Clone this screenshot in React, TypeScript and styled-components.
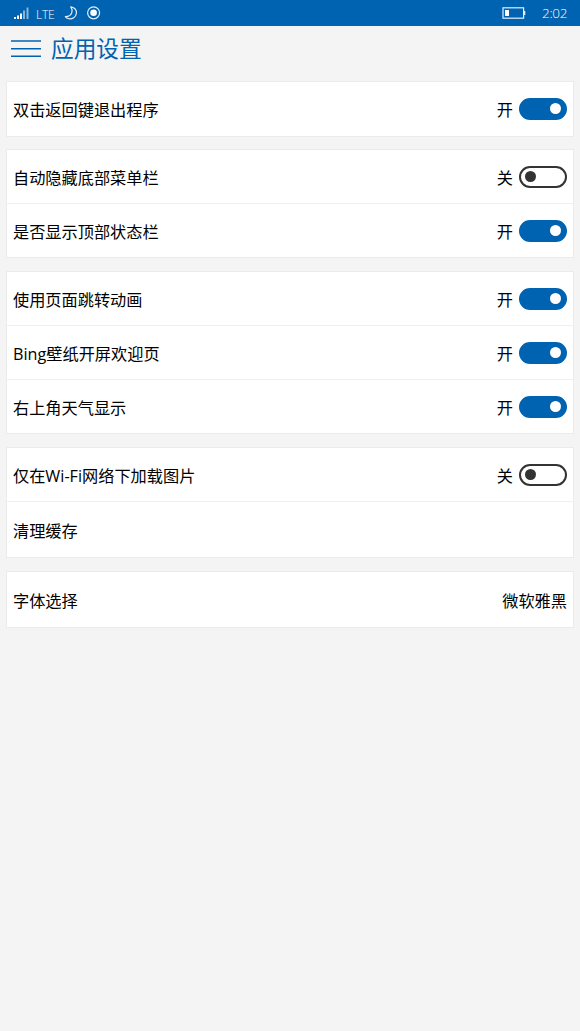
import React from "react";
import styled, { createGlobalStyle } from "styled-components";

const BLUE = "#0063b1";

const GlobalStyle = createGlobalStyle`
  * { box-sizing: border-box; }
  html, body { margin: 0; padding: 0; background: #f4f4f4; }
  body { font-family: "Open Sans", "Noto Sans CJK SC", sans-serif; color: #000; }
`;

const Page = styled.div`
  display: flex;
  flex-direction: column;
  width: 580px;
  height: 1031px;
  overflow: hidden;
  background: #f4f4f4;
`;

const StatusBar = styled.div`
  display: flex;
  justify-content: space-between;
  height: 26px;
  padding: 0 13px 0 13px;
  background: ${BLUE};
  color: #fff;
`;

const StatusGroup = styled.div`
  display: flex;
  align-items: center;
  svg { display: block; }
`;

const Network = styled.span`
  width: 19px;
  margin: 3px 9px 0 6px;
  font: 300 12px/20px "Open Sans", sans-serif;
  letter-spacing: -0.2px;
  white-space: nowrap;
`;

const Clock = styled.span`
  width: 25px;
  margin: 0 0 0 16px;
  font: 300 13.5px/20px "Open Sans", sans-serif;
  letter-spacing: -0.3px;
`;

const Header = styled.header`
  display: flex;
  align-items: center;
  height: 55px;
  padding: 0 0 9px 11px;
  gap: 10px;
  color: ${BLUE};
`;

const MenuButton = styled.button`
  display: flex;
  width: 30px;
  height: 18px;
  padding: 0;
  border: 0;
  background: none;
`;

const Title = styled.h1`
  margin: 0;
  font-size: 22.7px;
  line-height: 32px;
  font-weight: 400;
`;

const Settings = styled.main`
  display: flex;
  flex-direction: column;
  gap: 13px;
  padding: 0 6px;
`;

const Row = styled.div<{ $height: number }>`
  display: flex;
  align-items: center;
  justify-content: space-between;
  height: ${(p) => p.$height}px;
  padding: 0 6px;
  font-size: 16.2px;
  line-height: 24px;
  & + & { border-top: 1px solid #f0f0f0; }
`;

const Card = styled.section`
  display: flex;
  flex-direction: column;
  border: 1px solid #ebebeb;
  background: #fff;

  &:first-child {
    margin-bottom: -1px;
    padding-bottom: 1px;
  }
`;

const Text = styled.span`
  padding-top: 2px;
`;

const Control = styled.div`
  display: flex;
  align-items: center;
  gap: 6px;
`;

const Track = styled.button<{ $on: boolean }>`
  display: flex;
  align-items: center;
  justify-content: ${(p) => (p.$on ? "flex-end" : "flex-start")};
  width: 48px;
  height: 22px;
  padding: 0 4px;
  border: 2px solid ${(p) => (p.$on ? BLUE : "#333")};
  border-radius: 11px;
  background: ${(p) => (p.$on ? BLUE : "#fff")};
`;

const Knob = styled.span<{ $on: boolean }>`
  width: 11px;
  height: 11px;
  border-radius: 50%;
  background: ${(p) => (p.$on ? "#fff" : "#333")};
`;

type Item = { label: string; on?: boolean; value?: string; height: number };

const groups: Item[][] = [
  [{ label: "双击返回键退出程序", on: true, height: 53 }],
  [
    { label: "自动隐藏底部菜单栏", on: false, height: 53 },
    { label: "是否显示顶部状态栏", on: true, height: 54 },
  ],
  [
    { label: "使用页面跳转动画", on: true, height: 53 },
    { label: "Bing壁纸开屏欢迎页", on: true, height: 54 },
    { label: "右上角天气显示", on: true, height: 54 },
  ],
  [
    { label: "仅在Wi-Fi网络下加载图片", on: false, height: 53 },
    { label: "清理缓存", height: 56 },
  ],
  [{ label: "字体选择", value: "微软雅黑", height: 55 }],
];

const SignalIcon = () => (
  <svg width="17" height="14" viewBox="0 0 17 14">
    <path d="M1 11h2v2H1zM4 9.5h2V13H4zM7 7.5h2V13H7z" fill="#fff" />
    <path d="M10 4.5h2V13h-2zM13.5 1.5h2V13h-2z" fill="#86b5dc" />
  </svg>
);

const MenuIcon = () => (
  <svg width="30" height="18" viewBox="0 0 30 18">
    <path d="M0 1h30M0 8.7h30M0 16.3h30" stroke={BLUE} strokeWidth="1.5" />
  </svg>
);

const MoonIcon = () => (
  <svg width="14" height="14" viewBox="0 0 14 14" fill="none" stroke="#e3effa" strokeWidth="1.2" strokeLinejoin="round">
    <path d="M6.8 .8C10.3 1.6 12.8 4 12.4 7.3C12 11.2 8.2 13.3 4.7 12.7C3.2 12.4 2 11.5 1.3 10.6C4.5 10.6 7 9.4 7.8 6.6C8.3 4.7 8 2.6 6.8 .8Z" />
  </svg>
);

const RecordIcon = () => (
  <svg width="14" height="14" viewBox="0 0 14 14">
    <circle cx="6.6" cy="6.8" r="6" fill="none" stroke="#e3effa" strokeWidth="1.2" />
    <circle cx="6.6" cy="6.8" r="3.3" fill="#fff" />
  </svg>
);

const BatteryIcon = () => (
  <svg width="24" height="12" viewBox="0 0 24 12">
    <rect x="1" y=".8" width="20.6" height="10.4" fill="none" stroke="#e3effa" strokeWidth="1.2" />
    <path d="M22 4h1.3v4H22z" fill="#e3effa" />
    <path d="M3 3h4v6H3z" fill="#fff" />
  </svg>
);

const IconGap = styled.span`
  width: 9px;
`;

export default function App() {
  return (
    <Page>
      <GlobalStyle />
      <StatusBar>
        <StatusGroup>
          <SignalIcon />
          <Network>LTE</Network>
          <MoonIcon />
          <IconGap />
          <RecordIcon />
        </StatusGroup>
        <StatusGroup>
          <BatteryIcon />
          <Clock>2:02</Clock>
        </StatusGroup>
      </StatusBar>
      <Header>
        <MenuButton aria-label="菜单">
          <MenuIcon />
        </MenuButton>
        <Title>应用设置</Title>
      </Header>
      <Settings>
        {groups.map((items) => (
          <Card key={items[0].label}>
            {items.map(({ label, on, value, height }) => (
              <Row key={label} $height={height}>
                <Text>{label}</Text>
                {on !== undefined && (
                  <Control>
                    <Text>{on ? "开" : "关"}</Text>
                    <Track $on={on} role="switch" aria-checked={on}>
                      <Knob $on={on} />
                    </Track>
                  </Control>
                )}
                {value && <Text>{value}</Text>}
              </Row>
            ))}
          </Card>
        ))}
      </Settings>
    </Page>
  );
}
